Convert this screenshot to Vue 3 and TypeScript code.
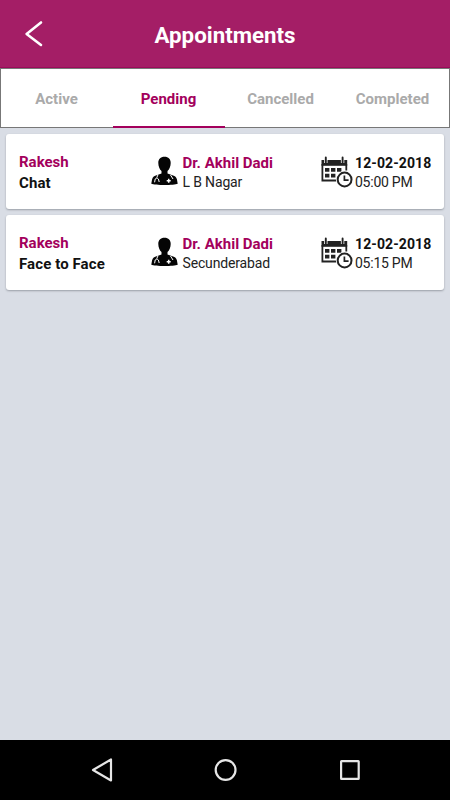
<script setup lang="ts">
import { ref } from 'vue'

interface Appointment {
  patient: string
  mode: string
  doctor: string
  place: string
  date: string
  time: string
}

const tabs: string[] = ['Active', 'Pending', 'Cancelled', 'Completed']
const activeTab = ref<string>('Pending')

const appointments: Appointment[] = [
  { patient: 'Rakesh', mode: 'Chat', doctor: 'Dr. Akhil Dadi', place: 'L B Nagar', date: '12-02-2018', time: '05:00 PM' },
  { patient: 'Rakesh', mode: 'Face to Face', doctor: 'Dr. Akhil Dadi', place: 'Secunderabad', date: '12-02-2018', time: '05:15 PM' },
]
</script>

<template>
  <div class="screen">
    <header class="header">
      <button class="back" aria-label="Back">
        <svg width="20" height="28" viewBox="0 0 20 28">
          <path d="M17 2.500 2.600 14 17 25" fill="none" stroke="#fff" stroke-width="2.600" stroke-linecap="round" stroke-linejoin="round" />
        </svg>
      </button>
      <h1 class="title">Appointments</h1>
    </header>

    <nav class="tabs">
      <button
        v-for="tab in tabs"
        :key="tab"
        class="tab"
        :class="{ active: tab === activeTab }"
        @click="activeTab = tab"
      >{{ tab }}</button>
    </nav>

    <main class="list">
      <article v-for="(item, i) in appointments" :key="i" class="card">
        <div class="patient">
          <div class="name">{{ item.patient }}</div>
          <div class="mode">{{ item.mode }}</div>
        </div>
        <div class="doctor">
          <svg class="doctor-icon" width="27" height="30" viewBox="0 0 27 30">
            <path d="M13.500.8c4 0 6.200 2.400 6.200 6.200 0 3.500-1.500 6.500-3.200 8.100v2.400l4.200 1.500c3.200 1 4.500 1.800 5.200 4.200l.8 4.500c-3.400 1.700-23 1.700-26.400 0l.8-4.500c.7-2.400 2-3.200 5.200-4.200l4.200-1.500v-2.400C8.800 13.500 7.300 10.500 7.300 7 7.300 3.200 9.500.8 13.500.8Z" fill="#050505" />
            <path d="M7 18.800 5.800 21.500M3.600 26.300l.6-3.300q2-2.400 3.200 0l.8 3M19.500 19l2.500 4" fill="none" stroke="#fff" stroke-width="1" />
            <path d="M17.700 22.800v4M15.700 24.800h4" stroke="#fff" stroke-width="1.500" />
          </svg>
          <div>
            <div class="name doctor-name">{{ item.doctor }}</div>
            <div class="detail place">{{ item.place }}</div>
          </div>
        </div>
        <div class="schedule">
          <svg class="calendar-icon" width="32" height="32" viewBox="0 0 32 32">
            <path d="M.5 4h25.700v5.800H.5Z" fill="#222" />
            <path d="M1.400 8v16.500h14.500M25.300 8v6.500" fill="none" stroke="#222" stroke-width="1.800" />
            <path d="M4.800 0v7M21.600 0v7" stroke="#fff" stroke-width="3.400" />
            <path d="M4.800 1.500v5M21.600 1.500v5" stroke="#222" stroke-width="1.900" stroke-linecap="round" />
            <path d="M4 12h4.400v3.800H4ZM10 12h4.400v3.800H10ZM16 12h4.400v3.800H16ZM4 17.700h4.400v3.800H4ZM10 17.700h4.400v3.800H10Z" fill="#222" />
            <circle cx="23.600" cy="23.500" r="8.700" fill="#fff" />
            <circle cx="23.600" cy="23.500" r="6.900" fill="#fff" stroke="#222" stroke-width="2" />
            <path d="M23.400 19.500v4.700h4.200" fill="none" stroke="#222" stroke-width="1.700" />
          </svg>
          <div>
            <div class="date">{{ item.date }}</div>
            <div class="detail time">{{ item.time }}</div>
          </div>
        </div>
      </article>
    </main>

    <footer class="navbar">
      <svg width="24" height="26" viewBox="0 0 24 26">
        <path d="M21 2.500v21L3 13Z" fill="none" stroke="#e6e6e6" stroke-width="2.200" stroke-linejoin="round" />
      </svg>
      <svg width="24" height="26" viewBox="0 0 24 26">
        <circle cx="11.600" cy="13" r="9.900" fill="none" stroke="#e6e6e6" stroke-width="2.200" />
      </svg>
      <svg width="24" height="26" viewBox="0 0 24 26">
        <rect x="3.100" y="4.200" width="17.600" height="17.600" rx=".4" fill="none" stroke="#e6e6e6" stroke-width="2.200" />
      </svg>
    </footer>
  </div>
</template>

<style>
body {
  margin: 0;
}
</style>

<style scoped>
.screen {
  display: flex;
  flex-direction: column;
  width: 100%;
  height: 800px;
  background: #d9dde5;
  font-family: Roboto, "Liberation Sans", sans-serif;
  overflow: hidden;
}

button {
  padding: 0;
  border: 0;
  background: none;
  font-family: inherit;
}

.header {
  display: grid;
  grid-template-columns: 60px 1fr 60px;
  align-items: center;
  box-sizing: border-box;
  height: 68px;
  border-bottom: 1px solid #9c0a5a;
  background: #a41e66;
}

.back {
  display: flex;
  padding-left: 24px;
}

.title {
  margin: 2px 0 0;
  color: #fff;
  font-size: 22.3px;
  line-height: 28px;
  font-weight: 700;
  text-align: center;
}

.tabs {
  display: grid;
  grid-template-columns: repeat(4, 1fr);
  box-sizing: border-box;
  height: 60px;
  border: 1px solid #777;
  background: #fff;
}

.tab {
  height: 59px;
  box-sizing: border-box;
  padding: 2px 1px 0 0;
  border-bottom: 2px solid transparent;
  color: #aaa;
  font-size: 15px;
  font-weight: 700;
}

.tab.active {
  border-bottom-color: #a3005c;
  color: #a3005c;
}

.list {
  display: flex;
  flex: 1;
  flex-direction: column;
  gap: 6.4px;
  padding: 6px;
}

.card {
  display: grid;
  grid-template-columns: 132px 169.5px 1fr;
  box-sizing: border-box;
  height: 75px;
  padding: 19px 0 0 13px;
  border-radius: 3px;
  background: #fff;
  box-shadow: 0 1px 2px rgba(60, 65, 75, 0.4);
  white-space: nowrap;
}

.name,
.mode,
.detail,
.date {
  height: 20px;
  line-height: 20px;
}

.name {
  color: #a3005c;
  font-size: 15px;
  font-weight: 700;
}

.mode {
  color: #111;
  font-size: 15px;
  font-weight: 700;
  letter-spacing: 0.1px;
}

.patient .name {
  margin-top: -1px;
  height: 21px;
}

.doctor,
.schedule {
  display: flex;
}

.doctor-icon {
  margin: 3px 4.5px 0 0;
}

.calendar-icon {
  margin: 3px 2.5px 0 0;
}

.detail {
  margin-top: -1px;
  color: #222;
  font-size: 14px;
  letter-spacing: -0.15px;
}

.time {
  letter-spacing: -0.25px;
}

.date {
  color: #111;
  font-size: 14px;
  font-weight: 700;
  letter-spacing: 0.1px;
}

.navbar {
  display: flex;
  justify-content: space-between;
  align-items: center;
  box-sizing: border-box;
  height: 60px;
  padding: 0 88px 0 90px;
  background: #000;
}
</style>
